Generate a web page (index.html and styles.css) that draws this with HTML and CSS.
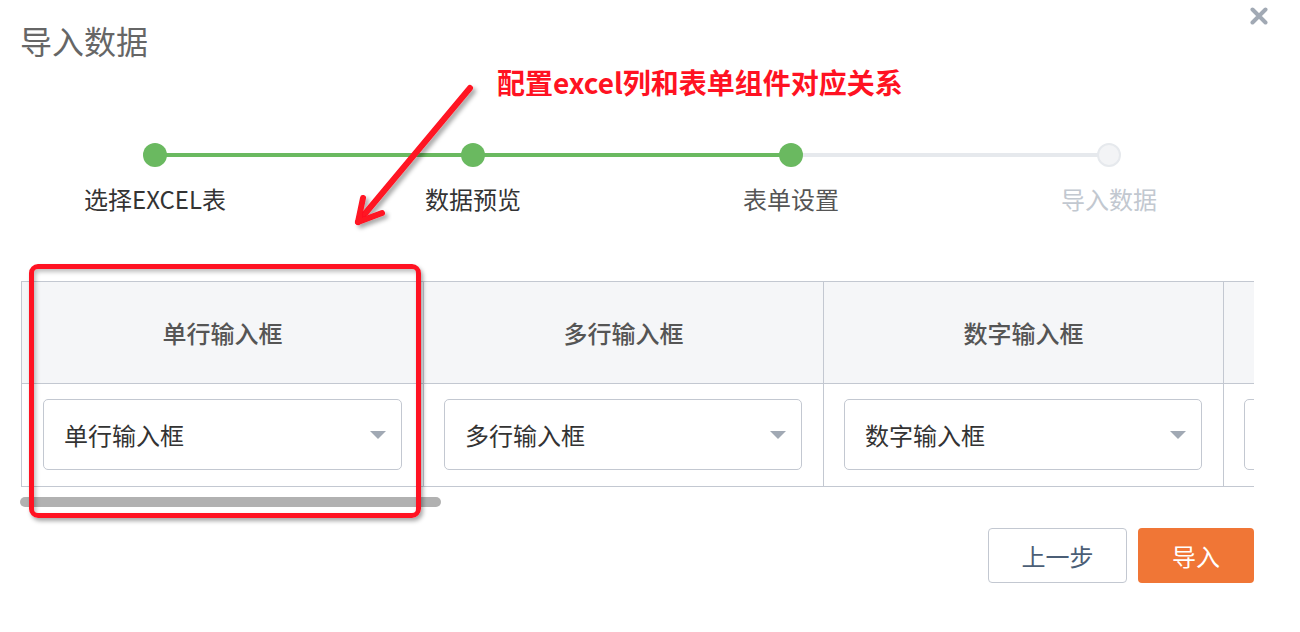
FILE: index.html
```html
<!DOCTYPE html>
<html lang="zh-CN">
<head>
<meta charset="utf-8">
<title>导入数据</title>
<link rel="stylesheet" href="styles.css">
</head>
<body>
<div class="dialog">
  <h1 class="title">导入数据</h1>
  <button class="close" aria-label="关闭">
    <svg width="18" height="18" viewBox="0 0 18 18"><path d="M2.5 2.5 L15.5 15.5 M15.5 2.5 L2.5 15.5" stroke="#a1a9b4" stroke-width="4" stroke-linecap="round"/></svg>
  </button>

  <div class="steps">
    <div class="step done line-done"><span class="dot"></span><span class="label">选择EXCEL表</span></div>
    <div class="step done line-done"><span class="dot"></span><span class="label">数据预览</span></div>
    <div class="step done current line-todo"><span class="dot"></span><span class="label">表单设置</span></div>
    <div class="step todo"><span class="dot"></span><span class="label">导入数据</span></div>
  </div>

  <div class="table-wrap">
    <div class="table">
      <div class="row head">
        <div class="cell">单行输入框</div>
        <div class="cell">多行输入框</div>
        <div class="cell">数字输入框</div>
        <div class="cell"></div>
      </div>
      <div class="row body">
        <div class="cell"><div class="select"><span>单行输入框</span><i class="caret"></i></div></div>
        <div class="cell"><div class="select"><span>多行输入框</span><i class="caret"></i></div></div>
        <div class="cell"><div class="select"><span>数字输入框</span><i class="caret"></i></div></div>
        <div class="cell"><div class="select"><span></span><i class="caret"></i></div></div>
      </div>
    </div>
  </div>
  <div class="scrollbar"></div>

  <div class="footer">
    <button class="btn btn-default">上一步</button>
    <button class="btn btn-primary">导入</button>
  </div>

  <div class="note">配置excel列和表单组件对应关系</div>
  <svg class="arrow" width="140" height="160" viewBox="0 0 140 160">
    <defs>
      <filter id="sh" x="-20%" y="-20%" width="140%" height="140%">
        <feDropShadow dx="3" dy="3" stdDeviation="2" flood-color="#000" flood-opacity="0.35"/>
      </filter>
    </defs>
    <g filter="url(#sh)" stroke="#ff1222" stroke-width="6" stroke-linecap="round" stroke-linejoin="round" fill="none">
      <path d="M120 8 L8 142"/>
      <path d="M13 118 L8 142 L32 133"/>
    </g>
  </svg>
  <div class="highlight"></div>
</div>
</body>
</html>
```

FILE: styles.css
```css
* { box-sizing: border-box; }
html, body { margin: 0; padding: 0; background: #fff; }
body {
  font-family: "Noto Sans CJK SC", "Noto Sans", sans-serif;
  color: #333;
  width: 1300px;
  height: 632px;
  overflow: hidden;
}
.dialog {
  position: relative;
  padding: 20px 46px 0 20px;
}
.title {
  margin: 0;
  font-size: 32px;
  line-height: 40px;
  font-weight: 400;
  color: #666;
}
.close {
  position: absolute;
  top: 7px;
  right: 32px;
  width: 18px;
  height: 18px;
  padding: 0;
  border: 0;
  background: none;
}
.close svg { display: block; }

/* steps */
.steps {
  display: grid;
  grid-template-columns: repeat(4, 318px);
  margin: 83px 0 0 -24px;
}
.step {
  position: relative;
  display: flex;
  flex-direction: column;
  align-items: center;
}
.step.line-done::after,
.step.line-todo::after {
  content: "";
  position: absolute;
  top: 10px;
  left: 159px;
  width: 318px;
  height: 4px;
  background: #6ab960;
}
.step.line-todo::after { background: #e6e9ed; }
.dot {
  position: relative;
  z-index: 1;
  width: 24px;
  height: 24px;
  border-radius: 50%;
  background: #6ab960;
}
.todo .dot {
  background: #f3f4f6;
  border: 2px solid #e6e9ed;
}
.label {
  margin-top: 17px;
  font-size: 24px;
  line-height: 30px;
  color: #333;
  white-space: nowrap;
}
.current .label { color: #555; }
.todo .label { color: #c2c8d0; }

/* table */
.table-wrap {
  margin: 67px 0 0 1px;
  width: 1233px;
  overflow: hidden;
  border-top: 1px solid #c3c8d1;
  border-left: 1px solid #c3c8d1;
  border-bottom: 1px solid #c3c8d1;
}
.table { width: 1600px; }
.row { display: flex; }
.cell {
  flex: 0 0 400px;
  width: 400px;
  border-right: 1px solid #c3c8d1;
}
.cell:first-child { flex-basis: 402px; width: 402px; }
.head { background: #f5f6f8; border-bottom: 1px solid #c3c8d1; }
.head .cell {
  height: 101px;
  display: flex;
  align-items: center;
  justify-content: center;
  font-size: 24px;
  font-weight: 500;
  color: #555;
}
.body .cell {
  padding: 15px 21px 16px 20px;
}
.body .cell:first-child { padding-left: 21px; }
.select {
  height: 71px;
  border: 1px solid #c3c8d1;
  border-radius: 5px;
  display: flex;
  align-items: center;
  justify-content: space-between;
  padding: 0 15px 0 20px;
  font-size: 24px;
  color: #333;
}
.caret {
  width: 0;
  height: 0;
  border-left: 8px solid transparent;
  border-right: 8px solid transparent;
  border-top: 8px solid #a1a9b4;
}
.scrollbar {
  margin-top: 10px;
  width: 421px;
  height: 10px;
  border-radius: 5px;
  background: #b1b1b1;
}

/* footer */
.footer {
  display: flex;
  justify-content: flex-end;
  gap: 11px;
  margin-top: 21px;
}
.btn {
  height: 55px;
  border-radius: 4px;
  font-family: inherit;
  font-size: 24px;
  padding: 0;
  cursor: pointer;
}
.btn-default {
  width: 139px;
  background: #fff;
  border: 1px solid #c3c8d1;
  color: #4b5e76;
}
.btn-primary {
  width: 116px;
  background: #f07636;
  border: 0;
  color: #fff;
}

/* annotations */
.note {
  position: absolute;
  left: 497px;
  top: 63px;
  font-size: 28px;
  line-height: 38px;
  font-weight: 700;
  color: #ff1222;
  white-space: nowrap;
}
.arrow {
  position: absolute;
  left: 350px;
  top: 80px;
}
.highlight {
  position: absolute;
  left: 29px;
  top: 264px;
  width: 392px;
  height: 254px;
  border: 5px solid #ff1222;
  border-radius: 9px;
  box-shadow: 2px 3px 4px rgba(0,0,0,0.35), inset 2px 3px 4px rgba(0,0,0,0.25);
}
```
